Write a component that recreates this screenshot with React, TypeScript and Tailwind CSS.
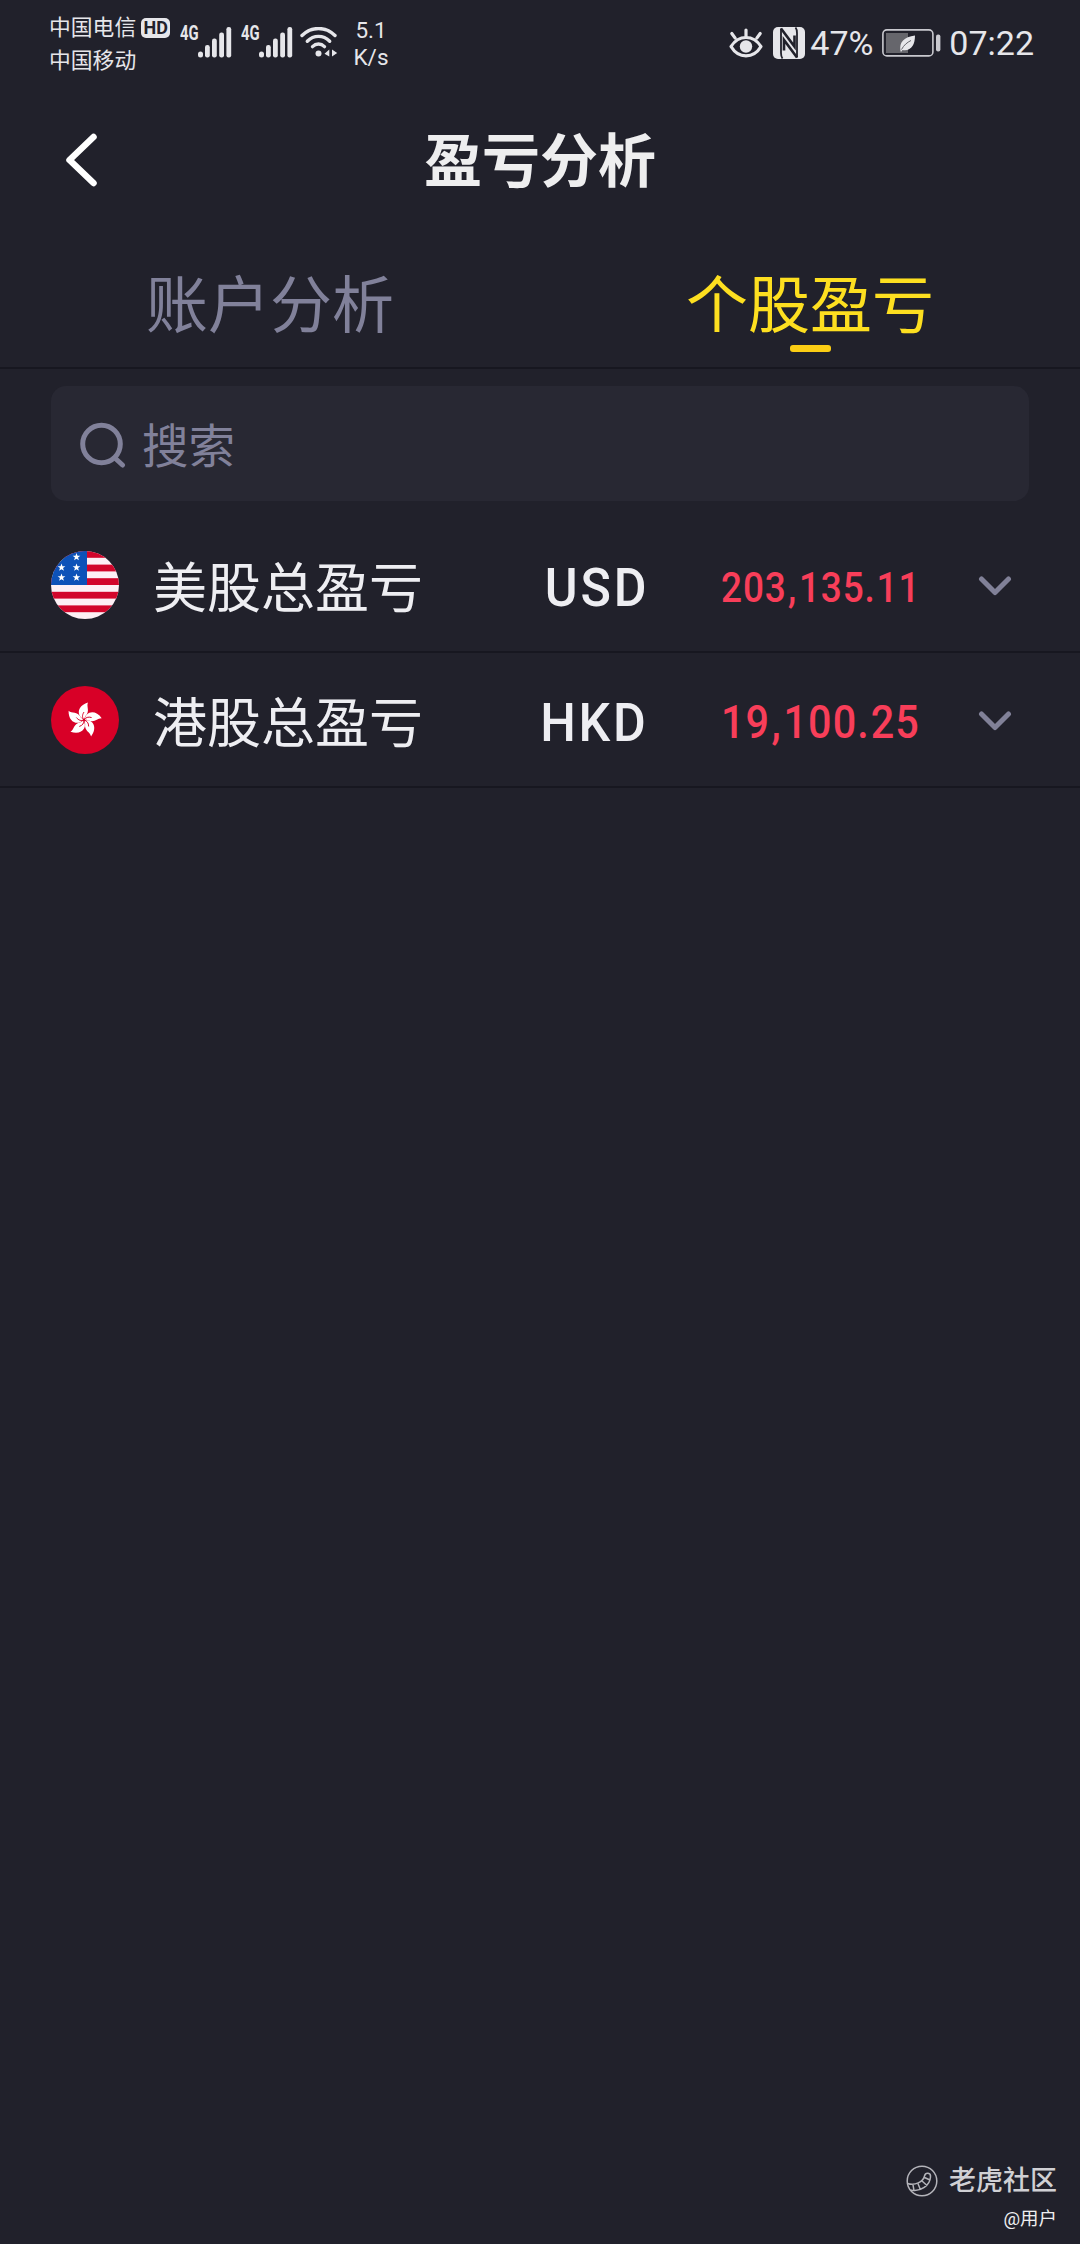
import type { ReactNode } from "react";

const CJK = "font-['Roboto','Noto_Sans_CJK_SC',sans-serif]";

function Signal() {
  return (
    <svg className="h-[31px] w-[34px]" viewBox="0 0 34 31" fill="#e6e6ea">
      <rect x="0" y="24.500" width="5" height="6" rx="2.5" />
      <rect x="7" y="18" width="4.800" height="12.5" rx="2.2" />
      <rect x="14" y="11.500" width="4.800" height="19" rx="2.2" />
      <rect x="21.200" y="5.500" width="4.800" height="25" rx="2.2" />
      <rect x="28.400" y="0" width="4.800" height="30.5" rx="2.2" />
    </svg>
  );
}

function Network() {
  return (
    <div className="flex h-[31px] w-[52px] items-start justify-between">
      <span className="-mt-[3px] w-[18px] origin-left scale-x-[0.74] text-[20px] leading-[19px] font-bold">4G</span>
      <Signal />
    </div>
  );
}

function Wifi() {
  return (
    <svg className="h-[31px] w-[38px]" viewBox="0 0 38 31" fill="none" stroke="#e6e6ea" strokeWidth="3.4" strokeLinecap="round">
      <path d="M2 8.500C11.5-.8 25.500-.8 35 8.500" />
      <path d="M7.300 14.200C13.800 7.800 23.200 7.800 29.700 14.200" />
      <path d="M12.500 19.600C16 16.200 21 16.200 24.500 19.600" />
      <circle cx="18.500" cy="26.500" r="3" fill="#e6e6ea" stroke="none" />
      <path d="M29.300 22.500v7l-4.800-2.700zM32 22.500v7l5.200-3.500z" fill="#e6e6ea" stroke="none" />
    </svg>
  );
}

function Eye() {
  return (
    <svg className="h-[32px] w-[34px]" viewBox="0 0 34 32" fill="none" stroke="#e6e6ea" strokeWidth="3.200" strokeLinecap="round">
      <path d="M2 19.500C9.500 7.500 24.500 7.500 32 19.500 24.500 32 9.500 32 2 19.500z" strokeLinejoin="round" />
      <circle cx="17" cy="19.500" r="6.200" fill="#e6e6ea" stroke="none" />
      <path d="M17 3v6M2.800 6.500l3.400 4.600M31.200 6.500l-3.400 4.600" />
    </svg>
  );
}

function Nfc() {
  return (
    <svg className="h-[32px] w-[32px]" viewBox="0 0 32 32">
      <rect width="32" height="32" rx="5" fill="#e6e6ea" />
      <path d="M8 1.500 21.500 19.500V8.500M24 30.500 11 13v10.500" fill="none" stroke="#21212b" strokeWidth="2.600" />
      <path d="M9.500 31.500C8.300 30 8 28 8 26V1.500M22.500.5C23.700 2 24 4 24 6v24.500" fill="none" stroke="#21212b" strokeWidth="1.800" />
    </svg>
  );
}

function Battery() {
  return (
    <svg className="h-[28px] w-[59px]" viewBox="0 0 59 28">
      <rect x="0.900" y="0.900" width="50" height="26" rx="4" fill="none" stroke="#c9c9cf" strokeWidth="1.600" />
      <rect x="4" y="4" width="22" height="20" fill="#66666c" />
      <path d="M18.500 22C17 13 22 8 33 6.500 33 16 29 22.500 20.500 21l-1.500 2z" fill="#e6e6ea" />
      <path d="M19.500 20.500C22 16 25 13.500 29 11.500" fill="none" stroke="#66666c" strokeWidth="1" />
      <rect x="54" y="5.500" width="4.400" height="17" rx="2" fill="#c9c9cf" />
    </svg>
  );
}

function UsFlag() {
  const stars = [[25.500, 6], [10.500, 16.500], [25.500, 16.500], [10.500, 26.500], [25.500, 26.500]];
  return (
    <svg className="size-[68px] rounded-full" viewBox="0 0 68 68">
      <rect width="68" height="68" fill="#fdf0f5" />
      {[0, 13.600, 27.200, 40.800, 54.400].map((y) => (
        <rect key={y} y={y} width="68" height="6.800" fill="#d2062b" />
      ))}
      <rect width="36" height="34" fill="#0d52b8" />
      {stars.map(([x, y]) => (
        <path
          key={`${x}-${y}`}
          transform={`translate(${x} ${y}) scale(1.1)`}
          d="M0-3.600.9-1.100 3.500-1.100 1.400.5 2.200 3 0 1.500-2.200 3-1.400.5-3.500-1.100-.9-1.100z"
          fill="#fff"
        />
      ))}
    </svg>
  );
}

function HkFlag() {
  return (
    <svg className="size-[68px] rounded-full" viewBox="0 0 68 68">
      <rect width="68" height="68" fill="#d80027" />
      {[0, 72, 144, 216, 288].map((a) => (
        <g key={a} transform={`translate(33 34) rotate(${a})`}>
          <path d="M0-1C-7-3-8-14 4-17.500 2-13.500 6.500-9 1.500-4 .8-3.200.8-2 0-1z" fill="#fff" />
          <path d="M0 0C-2-2.500-2-5 0-8" fill="none" stroke="#d80027" strokeWidth="0.900" />
        </g>
      ))}
    </svg>
  );
}

function Chevron() {
  return (
    <svg className="mt-[2px] h-[22px] w-[34px]" viewBox="0 0 34 22" fill="none" stroke="#818198" strokeWidth="5" strokeLinecap="round" strokeLinejoin="round">
      <path d="M3.500 4 17 17.500 30.500 4" />
    </svg>
  );
}

type RowProps = {
  flag: ReactNode;
  name: string;
  currency: string;
  children: ReactNode;
};

function Row({ flag, name, currency, children }: RowProps) {
  return (
    <div className="flex h-[135px] items-center border-b-2 border-[#171720] pl-[51px]">
      {flag}
      <span className="ml-[34px] w-[280px] pt-[10px] text-[54px] leading-[80px] text-[#eeeef2]">{name}</span>
      <div className="flex w-[213px] justify-end pt-[7px] text-[54px] leading-[80px] font-medium text-[#eeeef2]">
        <span className="-mr-[3px] origin-right scale-x-[0.93] tracking-[3px]">{currency}</span>
      </div>
      <div className="ml-[75px] w-[257px] pt-[15px] leading-[80px] font-medium text-[#f83e59]">{children}</div>
      <Chevron />
    </div>
  );
}

export default function App() {
  return (
    <div className={`flex h-[2244px] w-[1080px] flex-col bg-[#21212b] ${CJK}`}>
      {/* Status bar */}
      <div className="flex h-[88px] shrink-0 items-start text-[#e6e6ea]">
        <div className="ml-[49px] w-[131px] pt-[12px] text-[21.800px] leading-[32.500px]">
          <div className="flex items-center">
            中国电信
            <span className="ml-[5px] flex h-[20px] w-[29px] items-center justify-center rounded-[5px] bg-[#e6e6ea] text-[18px] leading-none font-bold text-[#21212b]">
              HD
            </span>
          </div>
          <div>中国移动</div>
        </div>
        <div className="flex pt-[27px]">
          <Network />
          <div className="w-[9px]" />
          <Network />
          <div className="w-[7px]" />
          <Wifi />
        </div>
        <div className="ml-[13px] w-[40px] pt-[17px] text-center text-[22.500px] leading-[27px]">
          <div>5.1</div>
          <div>K/s</div>
        </div>
        <div className="ml-auto flex items-center pt-[27px] pr-[46px]">
          <Eye />
          <div className="w-[10px]" />
          <Nfc />
          <span className="ml-[5px] w-[72px] text-[34px] leading-[32px]">47%</span>
          <Battery />
          <span className="ml-[8px] text-[34px] leading-[32px]">07:22</span>
        </div>
      </div>

      {/* Header */}
      <div className="flex h-[144px] shrink-0 items-center">
        <div className="w-[200px] pl-[63px]">
          <svg className="h-[54px] w-[36px]" viewBox="0 0 36 54" fill="none" stroke="#fff" strokeWidth="6.500" strokeLinecap="round" strokeLinejoin="round">
            <path d="M30.500 4 6.500 27 30.500 50" />
          </svg>
        </div>
        <h1 className="flex-1 pt-[3px] text-center text-[58px] leading-[80px] font-bold text-[#eeeeef]">盈亏分析</h1>
        <div className="w-[200px]" />
      </div>

      {/* Tabs */}
      <div className="grid h-[137px] shrink-0 grid-cols-2 border-b-2 border-[#171720] text-[62px]">
        <div className="pt-[31px] text-center leading-[88px] text-[#81819a]">账户分析</div>
        <div className="flex flex-col items-center pt-[31px] leading-[88px] text-[#fddf20]">
          个股盈亏
          <div className="-mt-[6px] h-[7px] w-[41px] rounded-[3px] bg-[#fbcd14]" />
        </div>
      </div>

      {/* Search */}
      <div className="mx-[51px] mt-[17px] flex h-[115px] shrink-0 items-center rounded-[15px] bg-[#282833] pl-[29px]">
        <svg className="mt-[2px] h-[46px] w-[46px]" viewBox="0 0 46 46" fill="none" stroke="#81819a" strokeWidth="5" strokeLinecap="round">
          <circle cx="21.500" cy="22" r="18.800" />
          <path d="M36 37 42.500 43" />
        </svg>
        <span className="ml-[16px] pt-[6px] text-[46.500px] leading-[70px] text-[#81819a]">搜索</span>
      </div>

      {/* Markets */}
      <div className="mt-[17px]">
        <Row flag={<UsFlag />} name="美股总盈亏" currency="USD">
          <span className="inline-block origin-left scale-x-[0.88] text-[42px] tracking-[1px]">
            203<span className="mr-[2px] ml-[1.500px]">,</span>135<span className="mr-[1px]">.</span>11
          </span>
        </Row>
        <Row flag={<HkFlag />} name="港股总盈亏" currency="HKD">
          <span className="inline-block origin-left scale-x-[0.88] text-[47px] tracking-[1.200px]">
            19<span className="mr-[2px] ml-[1.500px]">,</span>100<span className="mr-[1px]">.</span>25
          </span>
        </Row>
      </div>

      {/* Community mark */}
      <div className="mt-auto flex flex-col items-end pr-[23px] pb-[10px]">
        <div className="flex items-center text-[27px] leading-[40px] font-medium text-[#d0d0d4]">
          <svg className="mr-[11px] h-[32px] w-[32px]" viewBox="0 0 32 32" fill="none" stroke="#b4b4ba" strokeWidth="1.500">
            <circle cx="16" cy="16" r="14.800" />
            <path d="M1.500 18.500C9 21 17 17 18.500 11c1-4 6.500-3.500 6 1C24 20 15 27.500 4.500 25M7 19.800l1 5.800M12 18.800l2.500 6M16 16l5 4.500M18.500 12.500l5.500 2.500" />
          </svg>
          老虎社区
        </div>
        <div className="mt-[3px] text-[18.500px] leading-[30px] text-[#eeeef0]">@用户</div>
      </div>
    </div>
  );
}
